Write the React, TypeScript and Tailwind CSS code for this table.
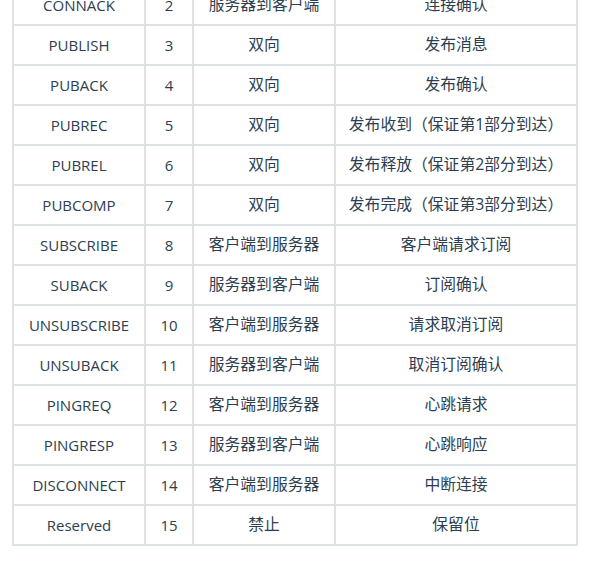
import React from 'react';

type Row = {
	name: string;
	value: number;
	direction: string;
	desc: string;
};

const rows: Row[] = [
	{ name: 'CONNACK', value: 2, direction: '服务器到客户端', desc: '连接确认' },
	{ name: 'PUBLISH', value: 3, direction: '双向', desc: '发布消息' },
	{ name: 'PUBACK', value: 4, direction: '双向', desc: '发布确认' },
	{ name: 'PUBREC', value: 5, direction: '双向', desc: '发布收到（保证第1部分到达）' },
	{ name: 'PUBREL', value: 6, direction: '双向', desc: '发布释放（保证第2部分到达）' },
	{ name: 'PUBCOMP', value: 7, direction: '双向', desc: '发布完成（保证第3部分到达）' },
	{ name: 'SUBSCRIBE', value: 8, direction: '客户端到服务器', desc: '客户端请求订阅' },
	{ name: 'SUBACK', value: 9, direction: '服务器到客户端', desc: '订阅确认' },
	{ name: 'UNSUBSCRIBE', value: 10, direction: '客户端到服务器', desc: '请求取消订阅' },
	{ name: 'UNSUBACK', value: 11, direction: '服务器到客户端', desc: '取消订阅确认' },
	{ name: 'PINGREQ', value: 12, direction: '客户端到服务器', desc: '心跳请求' },
	{ name: 'PINGRESP', value: 13, direction: '服务器到客户端', desc: '心跳响应' },
	{ name: 'DISCONNECT', value: 14, direction: '客户端到服务器', desc: '中断连接' },
	{ name: 'Reserved', value: 15, direction: '禁止', desc: '保留位' },
];

const cell = 'border-2 border-[#dfe2e5] text-center align-middle p-0';

export default function App() {
	return (
		<div
			className="h-[563px] w-[595px] overflow-hidden bg-white text-[15px] text-[#2c3e50]"
			style={{ fontFamily: '"Open Sans", "Noto Sans CJK SC", sans-serif' }}
		>
			<table className="-mt-[16px] ml-[12px] w-[566px] table-fixed border-collapse">
				<colgroup>
					<col className="w-[132px]" />
					<col className="w-[48px]" />
					<col className="w-[142px]" />
					<col className="w-[242px]" />
				</colgroup>
				<tbody>
					{rows.map((r) => (
						<tr key={r.name} className="h-[40px]">
							<td className={cell}>{r.name}</td>
							<td className={cell}>{r.value}</td>
							<td className={`${cell} text-[15.8px]`}>{r.direction}</td>
							<td className={`${cell} text-[15.8px]`}>{r.desc}</td>
						</tr>
					))}
				</tbody>
			</table>
		</div>
	);
}
